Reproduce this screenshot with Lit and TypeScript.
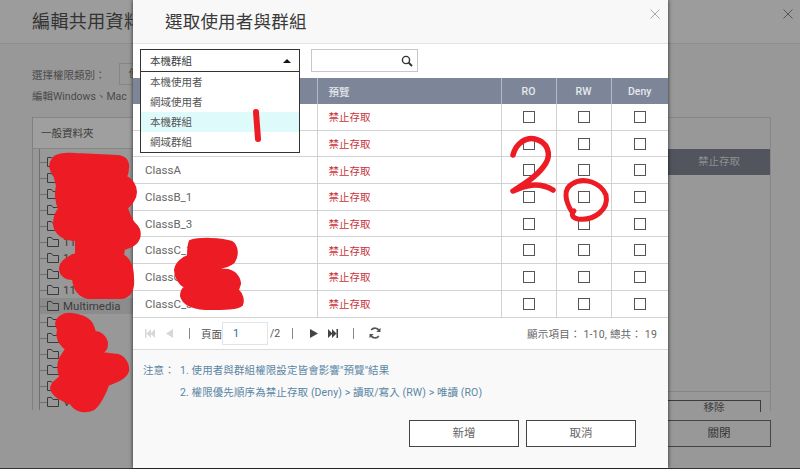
import { customElement } from "lit/decorators.js";

import { css, html, LitElement, svg } from "lit";

const FOLDERS = ["", "", "", "", "", "11", "11", "", "11", "Multimedia", "", "gs", "", "e", "up", "V      2"];
const ROWS = ["", "", "ClassA", "ClassB_1", "ClassB_3", "ClassC_1", "ClassC_2", "ClassC_3"];
const OPTIONS = ["本機使用者", "網域使用者", "本機群組", "網域群組"];

const scribbles = svg`
    <g fill="#ed1c24" stroke="#ed1c24" stroke-width="2" stroke-linejoin="round">
        <path d="M52 160 C54 154 66 153 76 154 L118 156 C126 157 129 162 128 168 C128 172 127 175 126 177 C132 179 136 186 136 192 C136 199 131 204 127 208 C129 214 131 221 136 225 C141 230 141 238 136 243 C132 247 127 248 124 249 L123 255 C130 259 133 268 133 278 C134 288 131 296 122 298 L88 298 C79 296 74 290 73 279 C64 279 60 274 60 268 C60 262 68 257 76 254 L76 240 C64 240 55 234 54 225 C54 217 56 212 59 209 C56 202 55 192 57 186 C56 182 55 178 54 175 C50 171 49 164 52 160 Z" />
        <path d="M56 324 C56 317 64 313 72 314 C80 315 90 318 93 326 L95 332 C101 332 107 338 107 344 C107 349 104 352 101 353 L118 355 C125 357 129 365 128 371 C126 378 118 381 108 385 C106 392 100 404 94 409 C86 413 76 412 71 404 C62 400 52 396 51 388 C52 382 57 380 60 377 C57 369 58 360 62 355 L66 349 C59 344 56 336 58 330 Z" />
        <path d="M190 241 C198 238 222 238 232 242 C238 246 238 256 234 262 C230 266 222 268 214 269 L228 270 C236 272 240 278 240 284 L238 290 C242 294 244 300 242 305 C238 309 224 309 205 309 C192 308 183 304 181 296 C181 292 182 289 185 287 C179 284 175 277 175 270 C176 263 182 258 188 256 C188 250 188 245 190 241 Z" />
        <g fill="none">
            <path stroke-width="6" stroke-linecap="round" d="M256 112 L258 139" />
            <path stroke-width="5.500" stroke-linecap="round" d="M513 155 C516 143 526 137 535 139 C548 142 551 154 546 163 C538 176 524 184 513 191 C524 186 538 181 553 190" />
            <path stroke-width="5" stroke-linecap="round" d="M572 212 C565 201 563 189 572 184 C584 176 601 183 606 195 C609 209 595 221 578 219 C572 218 571 214 574 211" />
        </g>
    </g>
`;

@customElement("app-root")
class AppRoot extends LitElement {
    static get styles() {
        return css`
            :host {
                display: block;
                width: 800px;
                height: 469px;
                overflow: hidden;
                position: relative;
                background: #989898;
                color: #3c3c3c;
                font-family: Roboto, "Noto Sans CJK TC", sans-serif;
                font-size: 10.5px;
            }

            /* page behind the dialog */
            .page {
                height: 468px;
                border-bottom: 1px solid #333;
                display: flex;
                flex-direction: column;
            }

            .page-head {
                height: 44px;
                flex: none;
                box-sizing: border-box;
                border-bottom: 1px solid #8d8d8d;
                padding: 0 7px 0 32px;
                font-size: 18px;
                line-height: 43px;
                letter-spacing: 0.4px;
                color: #333;
                background: #9c9c9c;
                display: flex;
                justify-content: space-between;
            }

            .page-head svg {
                width: 10px;
                height: 10px;
                margin-top: 9px;
            }

            .page-body {
                flex: 1;
                padding: 19px 29px 21px 32px;
                display: flex;
                flex-direction: column;
            }

            .type-row {
                display: flex;
                align-items: center;
                height: 22px;
                gap: 13px;
                color: #4a4a4a;
            }

            .type-box {
                width: 60px;
                height: 22px;
                box-sizing: border-box;
                border: 1px solid #868686;
                padding-left: 9px;
                line-height: 20px;
            }

            .hint {
                margin-top: 5px;
                height: 14px;
                line-height: 14px;
                color: #4a4a4a;
            }

            .panels {
                margin-top: 13px;
                display: flex;
                justify-content: space-between;
            }

            .tree {
                width: 101px;
                height: 293px;
                border-left: 1px solid #808080;
            }

            .tree-head {
                height: 32px;
                box-sizing: border-box;
                border: 1px solid #868686;
                border-left: 0;
                background: #9f9f9f;
                padding-left: 8px;
                line-height: 31px;
            }

            .tree-list {
                border-left: 1px solid #707070;
                margin-left: 6px;
                padding-top: 5px;
                height: 256px;
                overflow: hidden;
            }

            .tree-row {
                display: flex;
                align-items: center;
                height: 16px;
                margin-left: -8px;
                padding-left: 8px;
                font-size: 11.5px;
                white-space: pre;
            }

            .tree-row.on {
                background: #8c8c8c;
            }

            .tree-row::before {
                content: "";
                width: 7px;
                flex: none;
                border-top: 1px solid #707070;
            }

            .tree-row span {
                margin-left: 4px;
            }

            .right-panel {
                width: 102px;
                height: 293px;
                border-right: 1px solid #868686;
                border-top: 1px solid #868686;
                display: flex;
                flex-direction: column;
            }

            .deny-row {
                margin-top: 31px;
                height: 26px;
                background: #52555e;
                color: #8f8f8f;
                text-align: center;
                line-height: 26px;
            }

            .remove-bar {
                margin-top: auto;
                height: 20px;
                box-sizing: border-box;
                border-top: 1px solid #868686;
                padding: 8px 9px 0 0;
                display: flex;
                justify-content: flex-end;
            }

            .remove {
                width: 94px;
                height: 12px;
                box-sizing: border-box;
                border: 1px solid #3c3c3c;
                border-width: 1px 1px 0 0;
                text-align: center;
                line-height: 14px;
            }

            .page-foot {
                margin-top: auto;
                display: flex;
                justify-content: flex-end;
            }

            /* dialog */
            .modal {
                position: absolute;
                left: 133px;
                top: 0;
                width: 535px;
                height: 468px;
                display: flex;
                flex-direction: column;
                background: #f9f9f9;
                box-shadow: 0 0 4px rgba(0, 0, 0, 0.75);
            }

            .modal-head {
                height: 44px;
                flex: none;
                box-sizing: border-box;
                border-bottom: 1px solid #e4e4e4;
                padding-left: 32px;
                font-size: 17.5px;
                line-height: 44px;
                letter-spacing: 0.2px;
                color: #3a3a3a;
                background: #f8f8f8;
            }

            .close {
                position: absolute;
                right: 8px;
                top: 9px;
                width: 10px;
                height: 10px;
                display: block;
            }

            .tools {
                height: 34px;
                flex: none;
                box-sizing: border-box;
                padding: 5px 0 0 7px;
                display: flex;
                gap: 11px;
                background: #fff;
            }

            .select {
                width: 160px;
                height: 23px;
                box-sizing: border-box;
                border: 1px solid #333;
                padding: 0 8px 0 9px;
                display: flex;
                align-items: center;
                justify-content: space-between;
                background: #fff;
            }

            .caret {
                width: 0;
                height: 0;
                border: 4px solid transparent;
                border-top: 0;
                border-bottom: 4px solid #111;
            }

            .search {
                width: 107px;
                height: 23px;
                box-sizing: border-box;
                border: 1px solid #c8c8c8;
                display: flex;
                align-items: center;
                justify-content: flex-end;
                padding-right: 4px;
            }

            .menu {
                position: absolute;
                left: 7px;
                top: 72px;
                width: 160px;
                box-sizing: border-box;
                border: 1px solid #333;
                border-top: 0;
                background: #fff;
                z-index: 2;
            }

            .menu div {
                height: 20px;
                line-height: 21px;
                padding-left: 9px;
                color: #555;
            }

            .menu .on {
                background: #dffafa;
            }

            table {
                border-collapse: collapse;
                table-layout: fixed;
                width: 535px;
                flex: none;
                background: #fff;
            }

            th {
                height: 25px;
                padding: 1px 0 0 11px;
                background: #7d8699;
                border-right: 1px solid #b4bac6;
                color: #e6e8ec;
                font-weight: 500;
                text-align: left;
            }

            th.mid {
                padding: 1px 0 0;
                text-align: center;
            }

            th:last-child,
            td:last-child {
                border-right: 0;
            }

            td {
                height: 25.7px;
                padding: 0 0 0 12px;
                border-right: 1px solid #d2d2d2;
                border-bottom: 1px solid #d2d2d2;
                font-size: 11.5px;
                color: #666;
            }

            td.deny {
                padding-left: 11px;
                color: #c8353c;
                font-size: 10.5px;
            }

            td.mid {
                padding: 0;
            }

            .check {
                display: block;
                width: 10px;
                height: 10px;
                margin: 0 auto;
                border: 1px solid #555;
                background: #fff;
            }

            .pager {
                height: 32px;
                flex: none;
                box-sizing: border-box;
                border-bottom: 1px solid #dcdcdc;
                background: #fff;
                display: flex;
                align-items: center;
                padding: 0 11px 0 12px;
                color: #555;
            }

            .pager svg {
                display: block;
                flex: none;
            }

            .sep {
                width: 1px;
                height: 11px;
                background: #888;
                flex: none;
            }

            .page-input {
                width: 46px;
                height: 23px;
                box-sizing: border-box;
                border: 1px solid #dfe6ea;
                padding-left: 10px;
                line-height: 21px;
                color: #2f6f9f;
                font-size: 11px;
                margin: 0 2px 0 0;
            }

            .total {
                margin-left: auto;
                color: #666;
                letter-spacing: 0.2px;
            }

            .notes {
                padding: 13px 0 0 10px;
                display: grid;
                grid-template-columns: 37px 1fr;
                row-gap: 7px;
                line-height: 15px;
                letter-spacing: 0.1px;
                color: #5a86a5;
            }

            .buttons {
                margin-top: auto;
                padding: 0 32px 21px 0;
                display: flex;
                justify-content: flex-end;
                gap: 7px;
            }

            .btn {
                width: 110px;
                height: 27px;
                box-sizing: border-box;
                border: 1px solid #444;
                background: #fff;
                color: #666;
                font-size: 11.5px;
                text-align: center;
                line-height: 25px;
            }

            .page-btn {
                width: 103px;
                background: transparent;
                color: #333;
                border-left: 0;
            }

            .marks {
                position: absolute;
                left: 0;
                top: 0;
                z-index: 3;
                pointer-events: none;
            }
        `;
    }

    private folder() {
        return html`<svg width="12" height="10" viewBox="0 0 12 10" style="flex:none">
            <path d="M.5 9.500V.5h4l1.500 2h5.500v7z" fill="none" stroke="#3a3a3a" />
        </svg>`;
    }

    protected render() {
        return html`
            <div class="page">
                <div class="page-head">
                    <span>編輯共用資料夾</span>
                    <svg viewBox="0 0 10 10"><path d="M.5.5l9 9M9.500.5l-9 9" stroke="#555" fill="none" /></svg>
                </div>
                <div class="page-body">
                    <div class="type-row"><span>選擇權限類別：</span><span class="type-box">使</span></div>
                    <div class="hint">編輯Windows、Mac</div>
                    <div class="panels">
                        <div class="tree">
                            <div class="tree-head">一般資料夾</div>
                            <div class="tree-list">
                                ${FOLDERS.map(
                                    (name) => html`<div class="tree-row ${name === "Multimedia" ? "on" : ""}">
                                        ${this.folder()}<span>${name}</span>
                                    </div>`
                                )}
                            </div>
                        </div>
                        <div class="right-panel">
                            <div class="deny-row">禁止存取</div>
                            <div class="remove-bar"><div class="remove">移除</div></div>
                        </div>
                    </div>
                    <div class="page-foot"><div class="btn page-btn">關閉</div></div>
                </div>
            </div>

            <div class="modal">
                <div class="modal-head">選取使用者與群組</div>
                <svg class="close" viewBox="0 0 10 10">
                    <path d="M.5.5l9 9M9.500.5l-9 9" stroke="#aaa" fill="none" />
                </svg>
                <div class="tools">
                    <div class="select"><span>本機群組</span><span class="caret"></span></div>
                    <div class="search">
                        <svg width="12" height="12" viewBox="0 0 12 12">
                            <circle cx="5" cy="5" r="3.600" fill="none" stroke="#333" stroke-width="1.400" />
                            <path d="M7.600 7.600l3.400 3.400" stroke="#333" stroke-width="2" />
                        </svg>
                    </div>
                </div>
                <div class="menu">
                    ${OPTIONS.map((o) => html`<div class=${o === "本機群組" ? "on" : ""}>${o}</div>`)}
                </div>
                <table>
                    <colgroup>
                        <col style="width:184px" />
                        <col style="width:184px" />
                        <col style="width:55px" />
                        <col style="width:55px" />
                        <col style="width:57px" />
                    </colgroup>
                    <tr>
                        <th></th>
                        <th>預覽</th>
                        <th class="mid">RO</th>
                        <th class="mid">RW</th>
                        <th class="mid">Deny</th>
                    </tr>
                    ${ROWS.map(
                        (name) => html`<tr>
                            <td>${name}</td>
                            <td class="deny">禁止存取</td>
                            <td class="mid"><span class="check"></span></td>
                            <td class="mid"><span class="check"></span></td>
                            <td class="mid"><span class="check"></span></td>
                        </tr>`
                    )}
                </table>
                <div class="pager">
                    <svg width="10" height="9" viewBox="0 0 10 9"><path d="M0 0h1.500v9H0zM6 0v9L1.500 4.500zM10 0v9L5.500 4.500z" fill="#d8d8d8" /></svg>
                    <svg style="margin-left:11px" width="7" height="9" viewBox="0 0 7 9"><path d="M7 0v9L0 4.500z" fill="#d8d8d8" /></svg>
                    <span class="sep" style="margin-left:16px"></span>
                    <span style="margin-left:11px">頁面</span>
                    <div class="page-input">1</div>
                    <span>/2</span>
                    <span class="sep" style="margin-left:12px"></span>
                    <svg style="margin-left:17px" width="8" height="9" viewBox="0 0 8 9"><path d="M0 0v9l8-4.500z" fill="#444" /></svg>
                    <svg style="margin-left:10px" width="10" height="9" viewBox="0 0 10 9"><path d="M0 0v9l4.500-4.500zM4 0v9l4.500-4.500zM8.500 0H10v9H8.500z" fill="#444" /></svg>
                    <span class="sep" style="margin-left:15px"></span>
                    <svg style="margin-left:15px" width="12" height="12" viewBox="0 0 12 12">
                        <path d="M10.500 4.500A4.700 4.700 0 0 0 2.200 3M1.500 7.500A4.700 4.700 0 0 0 9.800 9" fill="none" stroke="#555" stroke-width="1.600" />
                        <path d="M11.500 .8v4.200H7.300zM.5 11.200V7h4.200z" fill="#555" />
                    </svg>
                    <span class="total">顯示項目： 1-10, 總共： 19</span>
                </div>
                <div class="notes">
                    <span>注意：</span><span>1. 使用者與群組權限設定皆會影響"預覽"結果</span>
                    <span></span><span>2. 權限優先順序為禁止存取 (Deny) &gt; 讀取/寫入 (RW) &gt; 唯讀 (RO)</span>
                </div>
                <div class="buttons">
                    <div class="btn">新增</div>
                    <div class="btn">取消</div>
                </div>
            </div>

            <svg class="marks" width="800" height="469" viewBox="0 0 800 469">${scribbles}</svg>
        `;
    }
}

export default AppRoot;
